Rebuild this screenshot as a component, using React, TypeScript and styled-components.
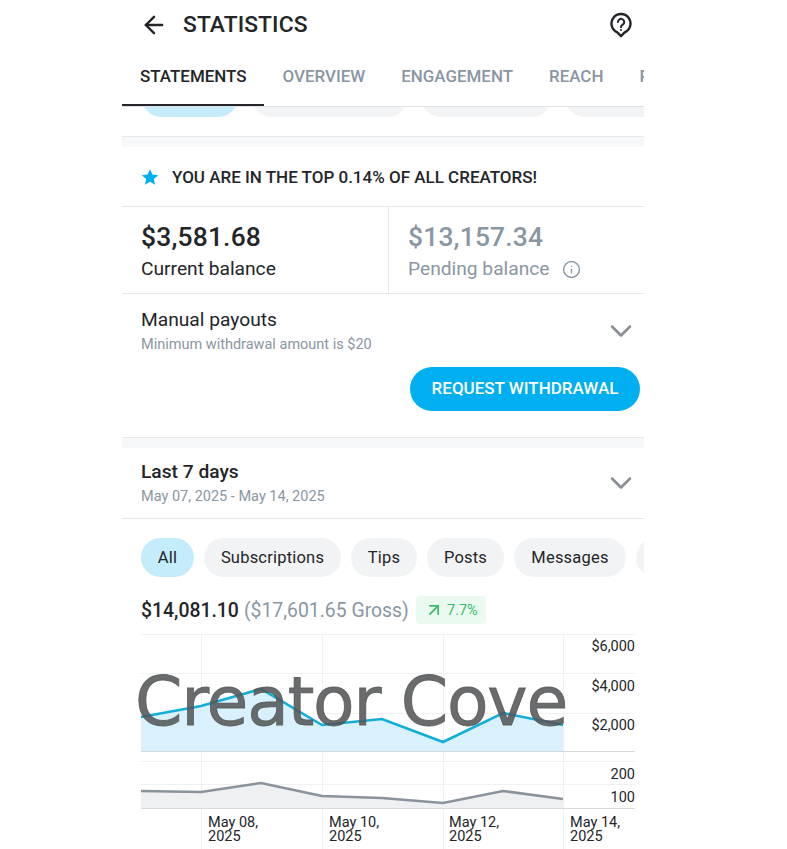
import React from "react";
import styled, { createGlobalStyle } from "styled-components";
import { ArrowLeft, ArrowUpRight, ChevronDown, Info } from "lucide-react";

const Global = createGlobalStyle`
  html, body { margin: 0; padding: 0; background: #fff; }
  body { font-family: Roboto, "Liberation Sans", sans-serif; color: #242529; }
  * { box-sizing: border-box; }
`;

const Page = styled.div`
  width: 787px;
  height: 849px;
  overflow: hidden;
  padding-left: 122px;
  background: #fff;
`;
const Phone = styled.div`
  width: 522px;
`;
const Header = styled.header`
  height: 50px;
  display: flex;
  align-items: center;
  padding: 0 11px 0 18px;
`;
const Title = styled.h1`
  margin: 0 0 2px 15px;
  font-size: 22.8px;
  font-weight: 500;
  flex: 1;
  letter-spacing: 0.1px;
`;
const Tabs = styled.nav`
  height: 57px;
  display: flex;
  overflow: hidden;
  border-bottom: 1px solid #dfe1e4;
`;
const Tab = styled.div<{ $active?: boolean }>`
  flex: none;
  height: 56px;
  padding: 0 18px 2px;
  display: flex;
  align-items: center;
  font-size: 16.96px;
  font-weight: 500;
  color: ${(p) => (p.$active ? "#242529" : "#8a96a3")};
  border-bottom: 2px solid ${(p) => (p.$active ? "#242529" : "transparent")};
`;
const Peek = styled.div`
  height: 10px;
  padding-left: 20px;
  display: flex;
  gap: 14px;
  align-items: flex-end;
  overflow: hidden;
`;
const PeekChip = styled.div<{ $w: number; $blue?: boolean }>`
  flex: none;
  width: ${(p) => p.$w}px;
  height: 39px;
  border-radius: 20px;
  background: ${(p) => (p.$blue ? "#c5ecfb" : "#f2f3f4")};
`;
const Band = styled.div<{ $top: number }>`
  margin-top: ${(p) => p.$top}px;
  height: 11px;
  background: #f7f8f9;
  border-top: 1px solid #e6e8ea;
`;
const Banner = styled.div`
  height: 60px;
  display: flex;
  align-items: center;
  gap: 13px;
  padding: 1px 0 0 19px;
  font-size: 17px;
  font-weight: 500;
  border-bottom: 1px solid #e6e8ea;
`;
const Balances = styled.div`
  display: grid;
  grid-template-columns: 266px 1fr;
  height: 87px;
  border-bottom: 1px solid #e6e8ea;
`;
const Balance = styled.div<{ $muted?: boolean }>`
  padding: 12px 0 0 19px;
  color: ${(p) => (p.$muted ? "#8a96a3" : "#242529")};
  ${(p) => (p.$muted ? "border-left: 1px solid #e6e8ea;" : "")}
`;
const Amount = styled.div`
  font-size: 26.4px;
  line-height: 36px;
  font-weight: 500;
  letter-spacing: 0.2px;
`;
const BalanceLabel = styled.div`
  font-size: 19.2px;
  line-height: 26px;
  margin-top: 1px;
  display: flex;
  align-items: center;
  gap: 12px;
`;
const Row = styled.div`
  display: flex;
  align-items: center;
  justify-content: space-between;
  padding: 0 5px 0 19px;
`;
const RowTitle = styled.div<{ $bold?: boolean }>`
  font-size: 19.2px;
  line-height: 24px;
  font-weight: ${(p) => (p.$bold ? 500 : 400)};
`;
const RowSub = styled.div`
  font-size: 14.5px;
  line-height: 20px;
  color: #8a96a3;
  margin-top: 3px;
`;
const Payout = styled(Row)`
  height: 72px;
  padding-top: 2px;
`;
const Last7 = styled(Row)`
  height: 71px;
  border-bottom: 1px solid #e6e8ea;
`;
const Actions = styled.div`
  display: flex;
  justify-content: flex-end;
  padding-right: 4px;
  margin-top: 1px;
`;
const Withdraw = styled.button`
  width: 230px;
  height: 44px;
  border: 0;
  border-radius: 22px;
  background: #00aff0;
  color: #fff;
  font: 500 17px Roboto, sans-serif;
  padding: 0 0 2px;
`;
const Chips = styled.div`
  display: flex;
  gap: 10px;
  padding: 19px 0 0 19px;
  overflow: hidden;
`;
const Chip = styled.div<{ $active?: boolean; $w: number }>`
  flex: none;
  width: ${(p) => p.$w}px;
  height: 39px;
  border-radius: 20px;
  display: flex;
  align-items: center;
  justify-content: center;
  font-size: 16.5px;
  letter-spacing: 0.2px;
  background: ${(p) => (p.$active ? "#c5ecfb" : "#f2f3f4")};
`;
const Totals = styled.div`
  display: flex;
  align-items: center;
  padding: 18px 0 0 19px;
  font-size: 19.4px;
  height: 48px;
`;
const Total = styled.span`
  font-weight: 500;
`;
const Gross = styled.span`
  color: #8a96a3;
  margin-left: 5px;
`;
const Trend = styled.span`
  margin-left: 7px;
  height: 28px;
  width: 70px;
  border-radius: 4px;
  background: #ebfaf0;
  color: #3cba6c;
  font-size: 14.5px;
  display: flex;
  align-items: center;
  justify-content: center;
  gap: 3px;
`;
const ChartWrap = styled.div`
  position: relative;
  height: 215px;
  margin-top: 9px;
`;
const Graph = styled.svg`
  display: block;
  font-family: Roboto, sans-serif;
  font-size: 14.5px;
  fill: #242529;
`;
const Watermark = styled.div`
  position: absolute;
  left: 13px;
  top: 28px;
  font-family: "DejaVu Sans", Inter, sans-serif;
  font-size: 68px;
  line-height: 80px;
  font-weight: 400;
  letter-spacing: -1.2px;
  white-space: nowrap;
  color: rgba(84, 86, 88, 0.88);
  -webkit-text-stroke: 0.8px rgba(84, 86, 88, 0.88);
`;

const HelpIcon = () => (
  <svg width="24" height="27" viewBox="0 0 26 28" fill="none" stroke="#242529" strokeWidth="2.6">
    <path d="M13 25.5 L9 21.4 A10.3 10.3 0 1 1 17 21.4 Z" strokeLinejoin="round" />
    <path d="M9.7 10.2a3.4 3.4 0 1 1 5.2 2.9c-1.3.8-1.9 1.4-1.9 2.9" strokeLinecap="round" strokeWidth="2.2" />
    <circle cx="13" cy="18.8" r="1.1" fill="#242529" stroke="none" />
  </svg>
);
const StarIcon = () => (
  <svg width="18" height="18" viewBox="0 0 24 24" fill="#00aff0">
    <path d="M12 1.5l3.2 7.2 7.8.8-5.9 5.2 1.7 7.7L12 18.4l-6.8 4 1.7-7.7L1 9.5l7.8-.8z" />
  </svg>
);

const OX = 122;
const OY = 634;
const blue: [number, number][] = [[141, 717], [201, 706], [261, 689], [322, 725], [382, 719], [443, 742], [503, 713], [563, 725]];
const gray: [number, number][] = [[141, 791], [201, 792], [261, 783], [322, 796], [382, 798], [443, 803], [503, 791], [563, 799]];
const pts = (a: [number, number][]) => a.map(([x, y]) => `${x - OX},${y - OY}`).join(" ");
const area = (a: [number, number][], base: number) =>
  `${a[0][0] - OX},${base - OY} ${pts(a)} ${a[a.length - 1][0] - OX},${base - OY}`;

const Chart = () => (
  <Graph width="522" height="215" viewBox="0 0 522 215">
    <g stroke="#f0f1f3" strokeWidth="1">
      {[0, 39, 79, 127, 150].map((y) => (
        <line key={y} x1="19" x2="513" y1={y + 0.5} y2={y + 0.5} />
      ))}
      {[79, 200, 321, 441].map((x) => (
        <line key={x} x1={x + 0.5} x2={x + 0.5} y1="0" y2="215" />
      ))}
    </g>
    <polygon points={area(blue, 751)} fill="#d9f1fc" />
    <polygon points={area(gray, 808)} fill="#eff0f2" />
    <line x1="19" x2="513" y1="117.5" y2="117.5" stroke="#d5d8dc" />
    <line x1="19" x2="513" y1="174.5" y2="174.5" stroke="#d5d8dc" />
    <polyline points={pts(blue)} fill="none" stroke="#12aed8" strokeWidth="2.6" />
    <polyline points={pts(gray)} fill="none" stroke="#8a929c" strokeWidth="2.6" />
    <g textAnchor="end">
      <text x="513" y="17">$6,000</text>
      <text x="513" y="57">$4,000</text>
      <text x="513" y="96">$2,000</text>
      <text x="513" y="145">200</text>
      <text x="513" y="168">100</text>
    </g>
    {[
      ["May 08,", 86],
      ["May 10,", 207],
      ["May 12,", 327],
      ["May 14,", 448],
    ].map(([d, x]) => (
      <g key={d as string}>
        <text x={x as number} y="193">{d}</text>
        <text x={x as number} y="207">2025</text>
      </g>
    ))}
  </Graph>
);

export default function App() {
  return (
    <Page>
      <Global />
      <Phone>
        <Header>
          <ArrowLeft size={28} strokeWidth={2.1} color="#242529" />
          <Title>STATISTICS</Title>
          <HelpIcon />
        </Header>
        <Tabs>
          <Tab $active>STATEMENTS</Tab>
          <Tab>OVERVIEW</Tab>
          <Tab>ENGAGEMENT</Tab>
          <Tab>REACH</Tab>
          <Tab>POSTS</Tab>
        </Tabs>
        <Peek>
          <PeekChip $w={96} $blue />
          <PeekChip $w={155} />
          <PeekChip $w={130} />
          <PeekChip $w={110} />
        </Peek>
        <Band $top={19} />
        <Banner>
          <StarIcon />
          <span>YOU ARE IN THE TOP 0.14% OF ALL CREATORS!</span>
        </Banner>
        <Balances>
          <Balance>
            <Amount>$3,581.68</Amount>
            <BalanceLabel>Current balance</BalanceLabel>
          </Balance>
          <Balance $muted>
            <Amount>$13,157.34</Amount>
            <BalanceLabel>
              Pending balance <Info size={19} strokeWidth={1.8} />
            </BalanceLabel>
          </Balance>
        </Balances>
        <Payout>
          <div>
            <RowTitle>Manual payouts</RowTitle>
            <RowSub>Minimum withdrawal amount is $20</RowSub>
          </div>
          <ChevronDown size={36} strokeWidth={1.7} color="#8a8f96" />
        </Payout>
        <Actions>
          <Withdraw>REQUEST WITHDRAWAL</Withdraw>
        </Actions>
        <Band $top={26} />
        <Last7>
          <div>
            <RowTitle $bold>Last 7 days</RowTitle>
            <RowSub>May 07, 2025 - May 14, 2025</RowSub>
          </div>
          <ChevronDown size={36} strokeWidth={1.7} color="#8a8f96" />
        </Last7>
        <Chips>
          <Chip $active $w={53}>All</Chip>
          <Chip $w={137}>Subscriptions</Chip>
          <Chip $w={66}>Tips</Chip>
          <Chip $w={77}>Posts</Chip>
          <Chip $w={112}>Messages</Chip>
          <Chip $w={66} />
        </Chips>
        <Totals>
          <Total>$14,081.10</Total>
          <Gross>($17,601.65 Gross)</Gross>
          <Trend>
            <ArrowUpRight size={20} strokeWidth={2} />
            7.7%
          </Trend>
        </Totals>
        <ChartWrap>
          <Chart />
          <Watermark>Creator Cove</Watermark>
        </ChartWrap>
      </Phone>
    </Page>
  );
}
